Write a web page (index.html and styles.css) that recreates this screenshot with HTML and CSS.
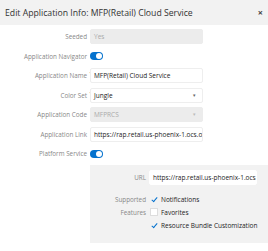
FILE: index.html
```html
<!DOCTYPE html>
<html>
  <head>
    <title>Edit Application Info</title>
    <meta name="viewport" content="width=device-width, initial-scale=1" />
    <link rel="stylesheet" href="styles.css">
  </head>
  <body>
    <div class="header">
      <h1>Edit Application Info: MFP(Retail) Cloud Service</h1>
      <span class="close">&times;</span>
    </div>
    <div class="form">
      <div class="row">
        <label class="label">Seeded</label>
        <div class="field disabled">Yes</div>
      </div>
      <div class="row">
        <label class="label">Application Navigator</label>
        <span class="toggle"><span class="knob"></span></span>
      </div>
      <div class="row">
        <label class="label">Application Name <span class="req">*</span></label>
        <div class="field">MFP(Retail) Cloud Service</div>
      </div>
      <div class="row">
        <label class="label">Color Set <span class="req">*</span></label>
        <div class="field select">Jungle<span class="arrow">&#9662;</span></div>
      </div>
      <div class="row">
        <label class="label">Application Code</label>
        <div class="field select disabled">MFPRCS<span class="arrow">&#9662;</span></div>
      </div>
      <div class="row">
        <label class="label">Application Link</label>
        <div class="field clip">https://rap.retail.us-phoenix-1.ocs.oc-test</div>
      </div>
      <div class="row">
        <label class="label">Platform Service</label>
        <span class="toggle"><span class="knob"></span></span>
      </div>
      <div class="panel">
        <div class="prow">
          <label class="plabel">URL</label>
          <div class="field url clip">https://rap.retail.us-phoenix-1.ocs.oc</div>
        </div>
        <div class="prow top">
          <label class="plabel">Supported<br>Features</label>
          <div class="checks">
            <div class="check"><span class="box on"></span>Notifications</div>
            <div class="check"><span class="box"></span>Favorites</div>
            <div class="check"><span class="box on"></span>Resource Bundle Customization</div>
          </div>
        </div>
      </div>
    </div>
  </body>
</html>
```

FILE: styles.css
```css
html {
  font-family: "Open Sans", Arial, sans-serif;
}
body {
  margin: 0;
  background-color: #fff;
  color: #333;
}
.header {
  display: flex;
  align-items: center;
  justify-content: space-between;
  height: 25px;
  padding: 0 5px 0 5px;
  background-color: #f2f2f2;
}
h1 {
  margin: 0;
  font-size: 8.7px;
  font-weight: normal;
  color: #333;
}
.close {
  font-size: 9px;
  font-weight: bold;
  color: #444;
}
.form {
  padding-top: 2px;
  font-size: 6.3px;
}
.row {
  display: flex;
  align-items: center;
  height: 19.5px;
}
.label {
  width: 87px;
  text-align: right;
  color: #888;
  position: relative;
}
.req {
  position: absolute;
  right: -6px;
  top: -2px;
  color: #555;
}
.field {
  box-sizing: border-box;
  width: 113px;
  height: 15px;
  margin-left: 3px;
  padding: 0 3px;
  line-height: 13px;
  font-size: 6.5px;
  border: 1px solid #eee;
  border-radius: 2px;
  background-color: #fff;
  color: #222;
  position: relative;
  white-space: nowrap;
}
.disabled {
  background-color: #ececec;
  border-color: #ececec;
  color: #aaa;
}
.arrow {
  position: absolute;
  right: 6px;
  top: 0;
  color: #666;
  font-size: 5px;
}
.disabled .arrow {
  color: #bbb;
}
.clip {
  overflow: hidden;
  padding-right: 0;
}
.toggle {
  margin-left: 3px;
  width: 13px;
  height: 8px;
  border-radius: 4px;
  background-color: #0572ce;
  display: flex;
  justify-content: flex-end;
  align-items: center;
  padding: 0 1px;
  box-sizing: border-box;
}
.knob {
  width: 6px;
  height: 6px;
  border-radius: 50%;
  background-color: #fff;
}
.panel {
  margin: 1px 0 0 90px;
  background-color: #f2f2f2;
  padding: 5px 0 0;
  height: 78px;
  box-sizing: border-box;
}
.prow {
  display: flex;
  align-items: center;
}
.prow.top {
  align-items: flex-start;
  margin-top: 8px;
}
.plabel {
  width: 56px;
  text-align: right;
  color: #888;
  line-height: 13px;
}
.url {
  width: 108px;
  border-color: #fff;
}
.checks {
  margin-left: 4px;
  color: #222;
  font-size: 6.5px;
}
.check {
  display: flex;
  align-items: center;
  height: 13px;
}
.box {
  box-sizing: border-box;
  width: 8px;
  height: 8px;
  margin-right: 3px;
  border: 1px solid #ddd;
  background-color: #fff;
  position: relative;
}
.box.on {
  border-color: transparent;
  background-color: transparent;
}
.box.on::after {
  content: "";
  position: absolute;
  left: 2px;
  top: 0;
  width: 2px;
  height: 5px;
  border: solid #0572ce;
  border-width: 0 1.5px 1.5px 0;
  transform: rotate(40deg);
}
```
